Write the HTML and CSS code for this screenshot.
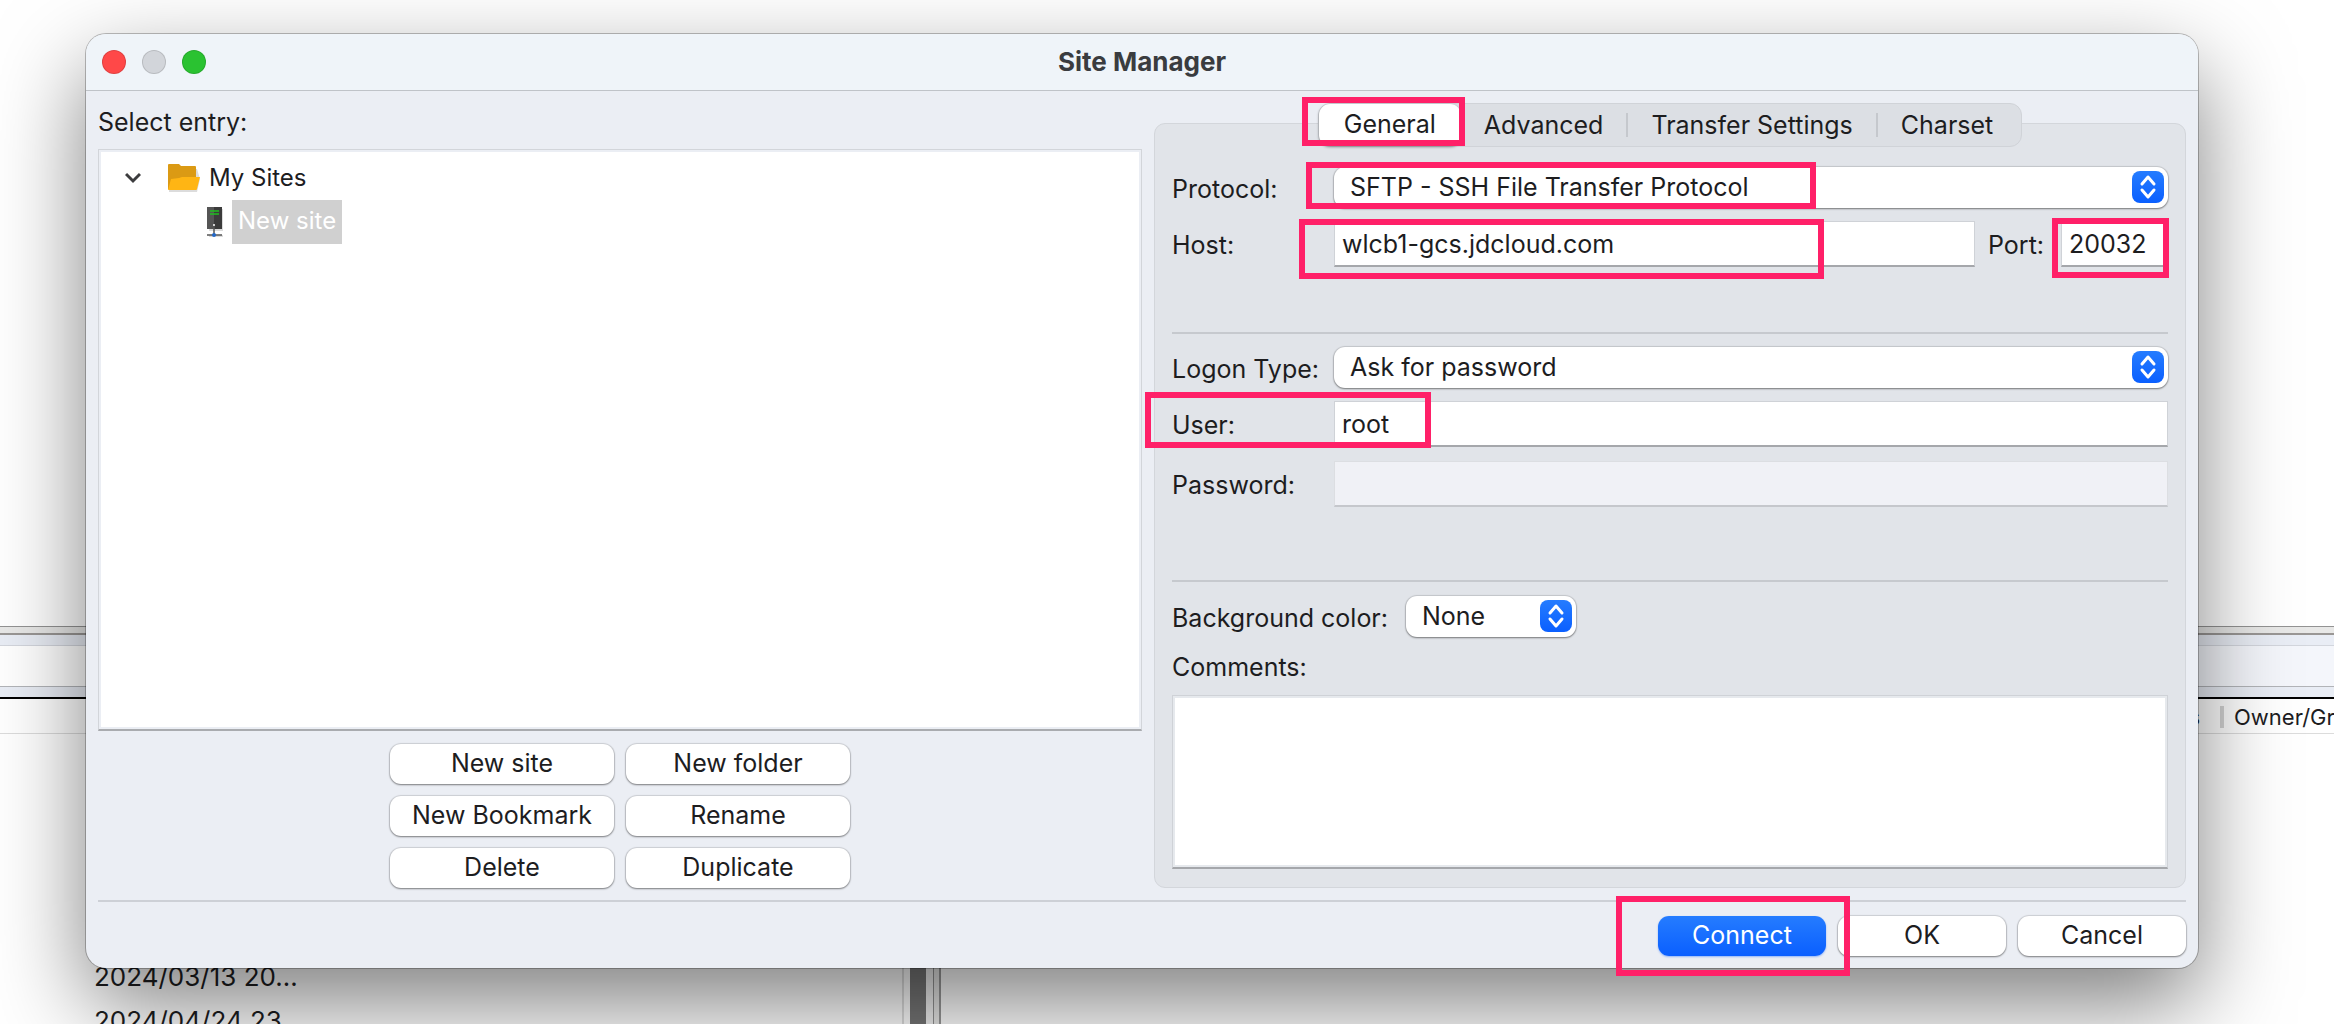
FILE: index.html
```html
<!DOCTYPE html>
<html lang="en">
<head>
    <meta charset="UTF-8">
    <meta name="viewport" content="width=device-width, initial-scale=1.0">
    <title>Site Manager</title>
    <link rel="stylesheet" href="styles.css">
</head>
<body>

<!-- Main window behind the dialog -->
<div class="backdrop">
    <div class="log-pane"></div>
    <div class="splitter"></div>
    <div class="path-bars">
        <div class="path-local"></div>
        <div class="path-remote"></div>
    </div>
    <div class="list-header">
        <span>Permissions</span>
        <span class="owner">Owner/Group</span>
    </div>
    <div class="file-lists">
        <div class="local-list">
            <p>2024/03/13 20…</p>
            <p>2024/04/24 23…</p>
        </div>
        <div class="scroll-track"></div>
        <div class="pane-divider"></div>
    </div>
</div>

<div class="dialog">
    <div class="titlebar">
        <div class="lights">
            <span class="light red"></span>
            <span class="light gray"></span>
            <span class="light green"></span>
        </div>
        <h1>Site Manager</h1>
    </div>

    <div class="content">
        <div class="entries">
            <h2>Select entry:</h2>
            <div class="tree">
                <div class="tree-row">
                    <svg class="arrow" width="16" height="12" viewBox="0 0 16 12"><path d="M1 2l7 7 7-7" fill="none" stroke="#3c3c3e" stroke-width="3"/></svg>
                    <svg width="34" height="30" viewBox="0 0 34 30">
                        <path d="M2 29V6h28l3 10-3 13z" fill="#dcdcdc"/>
                        <path d="M1 26V2q0-1 1-1h10l2 2h14q1 0 1 1v22z" fill="#db9a14"/>
                        <path d="M1 27L4 16l8-1 3-1h18l-3 12q0 1-1 1z" fill="#ffb514"/>
                    </svg>
                    <span>My Sites</span>
                </div>
                <div class="tree-row child">
                    <svg width="18" height="32" viewBox="0 0 18 32">
                        <path d="M3 3h14v22H3zM3 31h14v-2H3z" fill="#dcdcdc"/>
                        <path d="M1 1h15v22H1z" fill="#3b3b3b"/>
                        <path d="M1 1h7v22H1z" fill="#555"/>
                        <path d="M4 5h9M4 8h9" stroke="#1fc01f" stroke-width="1.5"/>
                        <path d="M8 20v8M1 29h15" stroke="#555" stroke-width="1.5"/>
                        <circle cx="8" cy="19" r="1" fill="#fff"/>
                        <circle cx="8" cy="29" r="2" fill="#2468c8"/>
                    </svg>
                    <span class="selected">New site</span>
                </div>
            </div>
            <div class="entry-buttons">
                <button>New site</button>
                <button>New folder</button>
                <button>New Bookmark</button>
                <button>Rename</button>
                <button>Delete</button>
                <button>Duplicate</button>
            </div>
        </div>

        <div class="settings">
            <div class="tabs">
                <button class="tab active">General</button>
                <button class="tab">Advanced</button>
                <button class="tab">Transfer Settings</button>
                <button class="tab">Charset</button>
                <span class="mark mark-tab"></span>
            </div>

            <form class="panel" onsubmit="return false">
                <div class="row row-protocol">
                    <label for="protocol">Protocol:</label>
                    <div class="select">
                        <select id="protocol">
                            <option>SFTP - SSH File Transfer Protocol</option>
                        </select>
                        <svg class="stepper" viewBox="0 0 32 32"><path d="M10 13l6-7 6 7M10 19l6 7 6-7"/></svg>
                    </div>
                    <span class="mark mark-protocol"></span>
                </div>
                <div class="row row-host">
                    <label for="host">Host:</label>
                    <input type="text" id="host" value="wlcb1-gcs.jdcloud.com">
                    <label class="port-label" for="port">Port:</label>
                    <input type="text" id="port" value="20032">
                    <span class="mark mark-host"></span>
                    <span class="mark mark-port"></span>
                </div>
                <hr class="after-host">
                <div class="row">
                    <label for="logon">Logon Type:</label>
                    <div class="select">
                        <select id="logon">
                            <option>Ask for password</option>
                        </select>
                        <svg class="stepper" viewBox="0 0 32 32"><path d="M10 13l6-7 6 7M10 19l6 7 6-7"/></svg>
                    </div>
                </div>
                <div class="row row-user">
                    <label for="user">User:</label>
                    <input type="text" id="user" value="root">
                    <span class="mark mark-user"></span>
                </div>
                <div class="row row-password">
                    <label for="password">Password:</label>
                    <input type="password" id="password" disabled>
                </div>
                <hr class="after-password">
                <div class="row row-color">
                    <label for="color">Background color:</label>
                    <div class="select">
                        <select id="color">
                            <option>None</option>
                        </select>
                        <svg class="stepper" viewBox="0 0 32 32"><path d="M10 13l6-7 6 7M10 19l6 7 6-7"/></svg>
                    </div>
                </div>
                <label class="comments-label" for="comments">Comments:</label>
                <textarea id="comments"></textarea>
            </form>
        </div>
    </div>

    <div class="footer">
        <div class="connect">
            <button class="primary">Connect</button>
            <span class="mark mark-connect"></span>
        </div>
        <button>OK</button>
        <button>Cancel</button>
    </div>
</div>

</body>
</html>
```
FILE: styles.css
```css
* {
    box-sizing: border-box;
}
body {
    margin: 0;
    min-height: 100vh;
    position: relative;
    overflow: hidden;
    background: white;
    color: #1d1d1f;
    font-family: Inter, "Liberation Sans", sans-serif;
    font-size: 25px;
    line-height: 32px;
}
button, input, select, textarea {
    font: inherit;
    color: inherit;
    margin: 0;
}

/* Main window behind the dialog */
.backdrop {
    position: absolute;
    inset: 0;
    display: flex;
    flex-direction: column;
    overflow: hidden;
}
.log-pane {
    height: 626px;
    flex: none;
}
.splitter {
    height: 9px;
    flex: none;
    background: #e8e8e7;
    border-top: 1px solid #939393;
    border-bottom: 2px solid #9a9795;
}
.path-bars {
    display: flex;
    height: 62px;
    flex: none;
    padding: 10px 0;
    background: #e9edf5;
}
.path-local, .path-remote {
    flex: 1;
    background: white;
    border-top: 1px solid #d3d6dd;
    border-bottom: 1px solid #b2b4b8;
}
.path-remote {
    background: #f4f6fb;
}
.list-header {
    display: flex;
    justify-content: flex-end;
    align-items: center;
    height: 37px;
    flex: none;
    padding-top: 2px;
    border-top: 2px solid black;
    border-bottom: 1px solid #dcdcdc;
    font-size: 22px;
}
.list-header .owner {
    width: 114px;
    height: 22px;
    line-height: 22px;
    margin-left: 20px;
    padding-left: 10px;
    border-left: 4px solid #d4d4d4;
    white-space: nowrap;
}
.file-lists {
    display: flex;
    flex: 1;
}
.local-list {
    width: 904px;
    padding: 221px 0 0 94px;
    border-right: 2px solid #dedede;
    font-size: 26px;
}
.local-list p {
    margin: 0;
    height: 44px;
    line-height: 44px;
}
.scroll-track {
    width: 29px;
    border-left: 6px solid white;
    border-right: 7px solid #f1f1f1;
    background: #767676;
}
.pane-divider {
    width: 8px;
    background: #e8e8e7;
    border-left: 1px solid #939393;
    border-right: 2px solid #999;
}

/* Dialog */
.dialog {
    position: relative;
    margin: 34px 136px 56px 86px;
    background: #ebeef4;
    border-radius: 20px;
    box-shadow: 0 0 0 1px rgba(0, 0, 0, 0.25), 0 36px 90px rgba(0, 0, 0, 0.5);
}
.titlebar {
    position: relative;
    height: 57px;
    display: flex;
    align-items: center;
    justify-content: center;
    background: #eff4f9;
    border-bottom: 1px solid #bfc3c8;
    border-radius: 20px 20px 0 0;
}
.titlebar h1 {
    margin: 0;
    font-size: 26px;
    font-weight: 700;
    color: #3a3c3f;
}
.lights {
    position: absolute;
    left: 16px;
    display: flex;
    gap: 16px;
}
.light {
    width: 24px;
    height: 24px;
    border-radius: 50%;
    border: 1px solid rgba(0, 0, 0, 0.12);
}
.red {
    background: #ff4848;
}
.gray {
    background: #d2d5da;
}
.green {
    background: #2ac231;
}
.content {
    display: grid;
    grid-template-columns: 1044fr 1032fr;
    gap: 12px;
    margin: 0 12px;
    padding: 12px 0;
    border-bottom: 2px solid #cdd0d6;
}

/* Entry tree */
.entries {
    display: flex;
    flex-direction: column;
}
.entries h2 {
    margin: 0;
    padding: 2px 0 10px;
    font-size: 25px;
    font-weight: 400;
    line-height: 34px;
}
.tree {
    flex: 1;
    padding-top: 6px;
    background: white;
    border: 1px solid #d2d5da;
    border-bottom: 2px solid #a9abaf;
    box-shadow: inset 0 0 0 2px #ebeef4;
    font-size: 24px;
}
.tree-row {
    display: flex;
    align-items: center;
    height: 44px;
    padding-left: 26px;
    gap: 8px;
}
.arrow {
    margin-right: 18px;
}
.tree-row.child {
    padding-left: 107px;
}
.selected {
    height: 44px;
    padding: 0 6px;
    line-height: 42px;
    background: #d0d0d0;
    color: white;
}
.entry-buttons {
    display: grid;
    grid-template-columns: 224px 224px;
    justify-content: center;
    gap: 12px;
    margin-top: 13px;
}
.entry-buttons button, .footer button {
    height: 40px;
    padding: 0 0 3px;
    border: none;
    border-radius: 11px;
    background: white;
    box-shadow: 0 0 1px 1px rgba(0, 0, 0, 0.12), 0 1px 2px rgba(0, 0, 0, 0.4);
}

/* Settings */
.settings {
    display: flex;
    flex-direction: column;
}
.tabs {
    position: relative;
    z-index: 1;
    align-self: center;
    display: flex;
    align-items: center;
    height: 44px;
    margin-bottom: -24px;
    padding-right: 5px;
    background: #dcdfe4;
    border: 1px solid #d0d3d8;
    border-radius: 12px;
}
.tab {
    height: 24px;
    padding: 0 23px;
    line-height: 22px;
    border: none;
    border-right: 2px solid #c5c8cd;
    background: none;
}
.tab:nth-child(4) {
    border-right: none;
}
.tab.active {
    height: 42px;
    padding: 0 25px 2px;
    border: none;
    border-radius: 11px;
    background: white;
    box-shadow: 0 1px 3px rgba(0, 0, 0, 0.4);
}
.panel {
    display: flex;
    flex-direction: column;
    padding: 43px 17px 18px;
    background: #e1e4e9;
    border: 1px solid #d3d6db;
    border-radius: 11px;
}
.row {
    position: relative;
    display: grid;
    grid-template-columns: 162px 1fr;
    align-items: center;
}
.row label {
    padding-top: 2px;
}
.row-host {
    grid-template-columns: 162px 1fr 86px 107px;
    margin-top: 13px;
}
.row .port-label {
    padding-left: 13px;
}
.row-user {
    margin-top: 13px;
}
.row-password {
    margin-top: 14px;
}
.row-color {
    grid-template-columns: auto 170px;
    justify-content: start;
    column-gap: 18px;
}
.row input {
    width: 100%;
    height: 46px;
    padding: 1px 7px 0;
    background: white;
    border: 1px solid #cfd2d7;
    border-bottom: 2px solid #a5a7ab;
    border-radius: 0;
}
.row input:disabled {
    background: #f0f1f6;
    border-color: #dcdee2;
    border-bottom-color: #c5c7cc;
}
.select {
    position: relative;
}
.select select {
    display: block;
    width: 100%;
    height: 41px;
    padding: 0 44px 2px 16px;
    appearance: none;
    border: none;
    border-radius: 11px;
    background: white;
    box-shadow: 0 0 1px 1px rgba(0, 0, 0, 0.12), 0 1px 2px rgba(0, 0, 0, 0.4);
}
.stepper {
    position: absolute;
    top: 4px;
    right: 4px;
    width: 32px;
    height: 32px;
    border-radius: 8px;
    background: linear-gradient(#257cff, #0a5fff);
    fill: none;
    stroke: white;
    stroke-width: 3;
    stroke-linecap: round;
    stroke-linejoin: round;
    pointer-events: none;
}
.panel hr {
    width: 100%;
    height: 2px;
    border: none;
    background: #c6c9ce;
}
.after-host {
    margin: 65px 0 13px;
}
.after-password {
    margin: 73px 0 14px;
}
.comments-label {
    margin: 14px 0 12px;
}
.panel textarea {
    display: block;
    width: 100%;
    height: 174px;
    padding: 8px;
    resize: none;
    background: white;
    border: 1px solid #cfd2d7;
    border-bottom: 2px solid #a5a7ab;
    box-shadow: inset 0 0 0 2px #e6e9ed;
}

/* Footer */
.footer {
    display: flex;
    justify-content: flex-end;
    gap: 12px;
    padding: 14px 12px 12px;
}
.footer button {
    width: 168px;
}
.footer .primary {
    background: linear-gradient(#257cff, #0a5fff);
    color: white;
    box-shadow: 0 1px 2px rgba(10, 95, 255, 0.4);
}
.connect {
    position: relative;
    z-index: 1;
}

/* Highlight frames */
.mark {
    position: absolute;
    z-index: 2;
    border: 6px solid #ff2068;
    pointer-events: none;
}
.mark-tab {
    top: -7px;
    left: -17px;
    width: 163px;
    height: 49px;
}
.mark-protocol {
    top: -5px;
    left: 134px;
    width: 510px;
    height: 47px;
}
.mark-host {
    top: -2px;
    left: 127px;
    width: 525px;
    height: 60px;
}
.mark-port {
    top: -3px;
    right: -1px;
    width: 117px;
    height: 60px;
}
.mark-user {
    top: -9px;
    left: -27px;
    width: 286px;
    height: 56px;
}
.mark-connect {
    top: -20px;
    left: -42px;
    width: 234px;
    height: 80px;
}
```
